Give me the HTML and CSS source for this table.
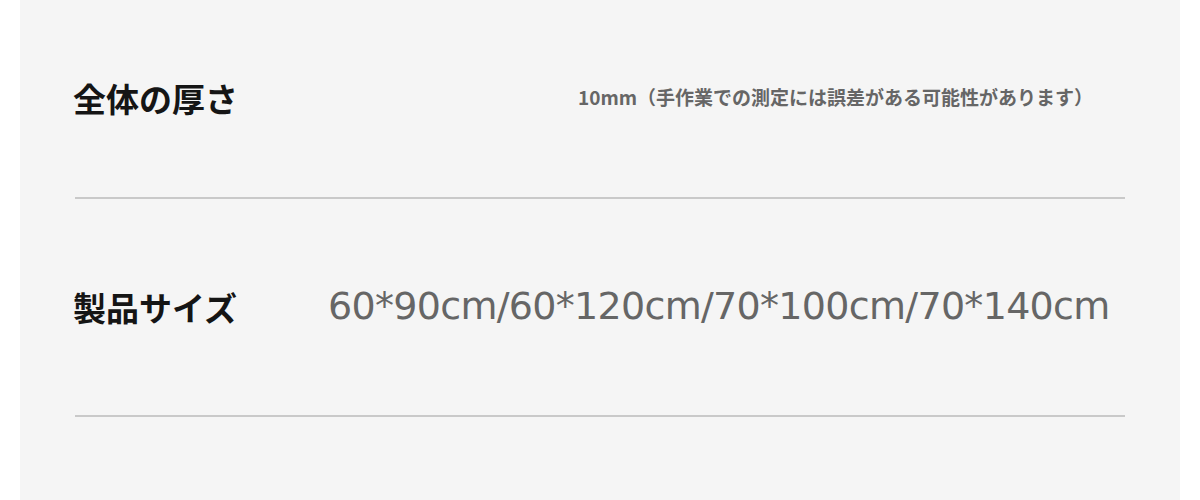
FILE: index.html
```html
<!DOCTYPE html>
<html lang="ja">
<head>
<meta charset="utf-8">
<title>製品仕様</title>
<link rel="stylesheet" href="styles.css">
</head>
<body>
<div class="panel">
  <div class="row row-first">
    <div class="label">全体の厚さ</div>
    <div class="value value-note">10mm（手作業での測定には誤差がある可能性があります）</div>
  </div>
  <div class="row row-second">
    <div class="label">製品サイズ</div>
    <div class="value value-size">60*90cm/60*120cm/70*100cm/70*140cm</div>
  </div>
</div>
</body>
</html>
```
FILE: styles.css
```css
html, body {
  margin: 0;
  padding: 0;
  background: #ffffff;
}

.panel {
  margin: 0 20px;
  height: 500px;
  background: #f5f5f5;
  padding: 0 55px;
  box-sizing: border-box;
}

.row {
  display: flex;
  align-items: center;
  border-bottom: 2px solid #c9c9c9;
}

.row-first {
  height: 197px;
}

.row-second {
  height: 216px;
}

.label {
  flex: 0 0 255px;
  margin-left: -2px;
  font-family: "Noto Sans CJK JP", "Noto Sans", sans-serif;
  font-weight: 700;
  font-size: 33px;
  color: #151515;
  line-height: 1;
}

.value {
  color: #666666;
  line-height: 1;
}

.value-note {
  padding-left: 250px;
  font-family: "Noto Sans CJK JP", "Noto Sans", sans-serif;
  font-weight: 700;
  font-size: 19px;
  margin-top: -4px;
}

.value-size {
  font-family: "DejaVu Sans", sans-serif;
  font-size: 38px;
  letter-spacing: -0.7px;
  margin-top: -2px;
}
```
